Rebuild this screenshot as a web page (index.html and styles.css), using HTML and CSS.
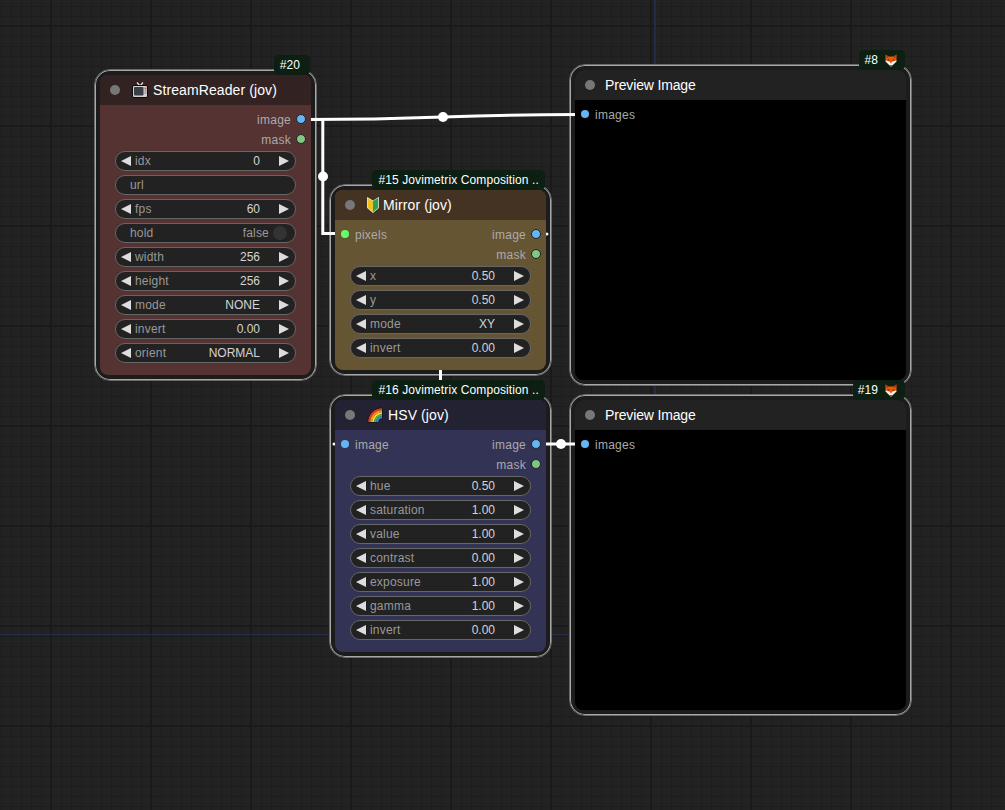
FILE: index.html
```html
<!DOCTYPE html>
<html>

<head>
    <title>Jovimetrix graph</title>
    <link rel="stylesheet" href="styles.css">
</head>

<body>
    <svg class="icon-defs" width="0" height="0">
        <symbol id="fox" viewBox="0 0 12 13">
            <path d="M0.5 0.5 L3.5 2.5 H8.5 L11.5 0.5 L11.5 7 L6 12.5 L0.5 7 Z" fill="#e8590c" />
            <path d="M0.5 0.5 L3.5 2.5 L2 4.5 Z M11.5 0.5 L8.5 2.5 L10 4.5 Z" fill="#a83c08" />
            <path d="M0.7 6.5 L4.5 7.5 L6 9.5 L7.5 7.5 L11.3 6.5 L11.5 7.5 L6 12.8 L0.5 7.5 Z" fill="#f6f1ea" />
            <path d="M5 11 H7 L6 12.6 Z" fill="#2b2220" />
            <path d="M2.8 5.4 H4.3 V6.4 H2.8 Z M7.7 5.4 H9.2 V6.4 H7.7 Z" fill="#2b2220" />
        </symbol>
    </svg>

    <div class="canvas">
        <div class="guide guide-v"></div>
        <div class="guide guide-h"></div>

        <!-- StreamReader -->
        <section class="node node-stream">
            <span class="badge badge-short">#20</span>
            <div class="panel panel-red">
                <header class="title">
                    <i class="title-dot"></i>
                    <svg class="title-icon" viewBox="0 0 16 16">
                        <path d="M5 0.5 L8 4 L11 0.5" fill="none" stroke="#e6e6e6" stroke-width="1.2" />
                        <rect x="0.5" y="3.5" width="15" height="12" rx="1.5" fill="#d2d2d2" stroke="#0d0d0d" />
                        <rect x="2" y="5" width="9.5" height="8.5" rx="1" fill="#3b4046" />
                        <rect x="12.5" y="5.5" width="2" height="2" fill="#e5533d" />
                        <rect x="12.5" y="8.5" width="2" height="1" fill="#777" />
                        <rect x="12.5" y="10.5" width="2" height="1" fill="#777" />
                    </svg>
                    <span>StreamReader (jov)</span>
                </header>
                <div class="body">
                    <div class="slot slot-out"><span>image</span><i class="pin pin-image"></i></div>
                    <div class="slot slot-out"><span>mask</span><i class="pin pin-mask"></i></div>
                    <div class="widgets">
                        <div class="widget"><i class="arrow-l"></i><span class="label">idx</span><span class="value">0</span><i class="arrow-r"></i></div>
                        <div class="widget widget-plain"><span class="label">url</span></div>
                        <div class="widget"><i class="arrow-l"></i><span class="label">fps</span><span class="value">60</span><i class="arrow-r"></i></div>
                        <div class="widget widget-plain"><span class="label">hold</span><span class="toggle-text">false</span><i class="toggle"></i></div>
                        <div class="widget"><i class="arrow-l"></i><span class="label">width</span><span class="value">256</span><i class="arrow-r"></i></div>
                        <div class="widget"><i class="arrow-l"></i><span class="label">height</span><span class="value">256</span><i class="arrow-r"></i></div>
                        <div class="widget"><i class="arrow-l"></i><span class="label">mode</span><span class="value">NONE</span><i class="arrow-r"></i></div>
                        <div class="widget"><i class="arrow-l"></i><span class="label">invert</span><span class="value">0.00</span><i class="arrow-r"></i></div>
                        <div class="widget"><i class="arrow-l"></i><span class="label">orient</span><span class="value">NORMAL</span><i class="arrow-r"></i></div>
                    </div>
                </div>
            </div>
        </section>

        <!-- Mirror -->
        <section class="node node-mirror">
            <span class="badge">#15 Jovimetrix Composition ..</span>
            <div class="panel panel-yellow">
                <header class="title">
                    <i class="title-dot"></i>
                    <svg class="title-icon title-icon-mark" viewBox="0 0 12 16">
                        <path d="M0.5 0.5 L6 4 L11.5 0.5 V11 L6 15.5 L0.5 11 Z" fill="#f2c21a" stroke="#f2f2f2" stroke-width="0.8" />
                        <path d="M6 4 L11.2 0.9 V10.8 L6 15 Z" fill="#2f9e5b" />
                    </svg>
                    <span>Mirror (jov)</span>
                </header>
                <div class="body">
                    <div class="slot-pair">
                        <div class="slot slot-in"><i class="pin pin-pixels"></i><span>pixels</span></div>
                        <div class="slot slot-out"><span>image</span><i class="pin pin-image"></i></div>
                    </div>
                    <div class="slot slot-out"><span>mask</span><i class="pin pin-mask"></i></div>
                    <div class="widgets">
                        <div class="widget"><i class="arrow-l"></i><span class="label">x</span><span class="value">0.50</span><i class="arrow-r"></i></div>
                        <div class="widget"><i class="arrow-l"></i><span class="label">y</span><span class="value">0.50</span><i class="arrow-r"></i></div>
                        <div class="widget"><i class="arrow-l"></i><span class="label">mode</span><span class="value">XY</span><i class="arrow-r"></i></div>
                        <div class="widget"><i class="arrow-l"></i><span class="label">invert</span><span class="value">0.00</span><i class="arrow-r"></i></div>
                    </div>
                </div>
            </div>
        </section>

        <!-- HSV -->
        <section class="node node-hsv">
            <span class="badge">#16 Jovimetrix Composition ..</span>
            <div class="panel panel-blue">
                <header class="title">
                    <i class="title-dot"></i>
                    <svg class="title-icon" viewBox="0 0 16 16">
                        <path d="M0.5 15.5 A15 15 0 0 1 15.5 0.5 V11 A4.5 4.5 0 0 0 11 15.5 Z" fill="#111" />
                        <path d="M2.2 15 A12.8 12.8 0 0 1 15 2.2" fill="none" stroke="#e8352b" stroke-width="2" />
                        <path d="M4.2 15 A10.8 10.8 0 0 1 15 4.2" fill="none" stroke="#f59a1c" stroke-width="2" />
                        <path d="M6.2 15 A8.8 8.8 0 0 1 15 6.2" fill="none" stroke="#f6e02c" stroke-width="2" />
                        <path d="M8.2 15 A6.8 6.8 0 0 1 15 8.2" fill="none" stroke="#45b649" stroke-width="2" />
                        <path d="M10.2 15 A4.8 4.8 0 0 1 15 10.2" fill="none" stroke="#3a8ee6" stroke-width="2" />
                    </svg>
                    <span>HSV (jov)</span>
                </header>
                <div class="body">
                    <div class="slot-pair">
                        <div class="slot slot-in"><i class="pin pin-input"></i><span>image</span></div>
                        <div class="slot slot-out"><span>image</span><i class="pin pin-image"></i></div>
                    </div>
                    <div class="slot slot-out"><span>mask</span><i class="pin pin-mask"></i></div>
                    <div class="widgets">
                        <div class="widget"><i class="arrow-l"></i><span class="label">hue</span><span class="value">0.50</span><i class="arrow-r"></i></div>
                        <div class="widget"><i class="arrow-l"></i><span class="label">saturation</span><span class="value">1.00</span><i class="arrow-r"></i></div>
                        <div class="widget"><i class="arrow-l"></i><span class="label">value</span><span class="value">1.00</span><i class="arrow-r"></i></div>
                        <div class="widget"><i class="arrow-l"></i><span class="label">contrast</span><span class="value">0.00</span><i class="arrow-r"></i></div>
                        <div class="widget"><i class="arrow-l"></i><span class="label">exposure</span><span class="value">1.00</span><i class="arrow-r"></i></div>
                        <div class="widget"><i class="arrow-l"></i><span class="label">gamma</span><span class="value">1.00</span><i class="arrow-r"></i></div>
                        <div class="widget"><i class="arrow-l"></i><span class="label">invert</span><span class="value">0.00</span><i class="arrow-r"></i></div>
                    </div>
                </div>
            </div>
        </section>

        <!-- Previews -->
        <section class="node node-preview-a">
            <span class="badge badge-fox">#8 <svg class="fox"><use href="#fox" /></svg></span>
            <div class="panel panel-preview">
                <header class="title title-preview">
                    <i class="title-dot"></i>
                    <span>Preview Image</span>
                </header>
                <div class="body body-preview">
                    <div class="slot slot-in"><i class="pin pin-input"></i><span>images</span></div>
                </div>
            </div>
        </section>

        <section class="node node-preview-b">
            <span class="badge badge-fox">#19 <svg class="fox"><use href="#fox" /></svg></span>
            <div class="panel panel-preview">
                <header class="title title-preview">
                    <i class="title-dot"></i>
                    <span>Preview Image</span>
                </header>
                <div class="body body-preview">
                    <div class="slot slot-in"><i class="pin pin-input"></i><span>images</span></div>
                </div>
            </div>
        </section>

        <!-- links run over the selection frames but under the panels -->
        <svg class="links" width="1005" height="810">
            <g fill="none" stroke="#fff" stroke-width="3">
                <path d="M306 119.5 C443 119.5 443 114.5 580 114.5" />
                <path d="M306 119.5 H322.8 V233.5 H340" />
                <path d="M440.5 360 V400" />
                <path d="M541 444 H580" />
            </g>
            <g fill="#fff">
                <circle cx="443" cy="117" r="5" />
                <circle cx="323" cy="176.5" r="5" />
                <circle cx="561" cy="444" r="5" />
                <circle cx="547" cy="234" r="1.5" />
                <circle cx="334" cy="444" r="1.5" />
            </g>
        </svg>
    </div>
</body>

</html>
```

FILE: styles.css
```css
* {
    box-sizing: border-box;
}

body {
    margin: 0;
    background: #222222;
    font-family: "Liberation Sans", Arial, sans-serif;
    overflow: hidden;
}

.icon-defs {
    position: absolute;
}

/* Graph canvas with its grid */
.canvas {
    position: relative;
    width: 1005px;
    height: 810px;
    overflow: hidden;
    background-color: #222222;
    background-image:
        linear-gradient(90deg, #1a1a1a 2px, transparent 2px),
        linear-gradient(#1a1a1a 2px, transparent 2px),
        linear-gradient(90deg, #1d1d1d 1px, transparent 1px),
        linear-gradient(#1d1d1d 1px, transparent 1px);
    background-size: 100px 100px, 100px 100px, 10px 10px, 10px 10px;
    background-position: 50px 0, 0 25px, 1px 0, 0 6px;
}

.guide {
    position: absolute;
    background: #232c44;
}

.guide-v {
    left: 654px;
    top: 0;
    width: 2px;
    height: 400px;
}

.guide-h {
    left: 0;
    top: 634px;
    width: 600px;
    height: 1px;
}

.links {
    position: absolute;
    left: 0;
    top: 0;
    z-index: 1;
}

/* Node: selection frame + coloured panel */
.node {
    position: absolute;
    padding: 4px;
    background: #1c1c1c;
    border: 1px solid #6a6a6a;
    box-shadow: inset 0 0 0 1px #a8a8a8;
    border-radius: 16px;
    --gap: 5px;
}

.node > .panel {
    margin: 1px;
    height: calc(100% - 2px);
}

.node-stream {
    left: 94px;
    top: 69px;
    width: 223px;
    height: 312px;
}

.node-mirror {
    left: 329px;
    top: 184px;
    width: 223px;
    height: 192px;
}

.node-hsv {
    left: 329px;
    top: 394px;
    width: 223px;
    height: 264px;
}

.node-preview-a {
    left: 569px;
    top: 64px;
    width: 343px;
    height: 322px;
}

.node-preview-b {
    left: 569px;
    top: 394px;
    width: 343px;
    height: 322px;
}

.panel {
    position: relative;
    z-index: 2;
    display: flex;
    flex-direction: column;
    height: 100%;
    border-radius: 8px;
    overflow: hidden;
}

.panel-red {
    background: #553333;
    --title: #332222;
}

.panel-yellow {
    background: #665533;
    --title: #443322;
}

.panel-blue {
    background: #333355;
    --title: #222233;
}

.panel-preview {
    background: #000000;
    --title: #222222;
}

.badge {
    position: absolute;
    z-index: 3;
    top: -15px;
    right: 6px;
    height: 20px;
    padding: 0 6px;
    display: flex;
    align-items: center;
    gap: 7px;
    background: #0c1f12;
    border-radius: 5px;
    color: #ffffff;
    font-size: 12px;
    letter-spacing: 0.11px;
    white-space: nowrap;
}

.badge-short {
    padding-right: 10px;
}

.badge-fox {
    padding: 0 8px 0 5px;
}

.fox {
    width: 12px;
    height: 13px;
}

.title {
    display: flex;
    align-items: center;
    flex: none;
    height: 30px;
    padding-left: 10px;
    background: var(--title);
    color: #ffffff;
    font-size: 14px;
    letter-spacing: 0.1px;
}

.title-dot {
    width: 10px;
    height: 10px;
    border-radius: 50%;
    background: #777777;
}

.title-icon {
    width: 16px;
    height: 16px;
    margin: 0 5px 0 12px;
}

.title-icon-mark {
    width: 12px;
    margin: 0 4px 0 12px;
}

.title-preview {
    letter-spacing: -0.15px;
}

.title-preview .title-dot {
    margin-right: 10px;
}

.body {
    flex: 1;
    padding-top: 4px;
    font-size: 12px;
}

/* Slots */
.slot {
    display: flex;
    align-items: center;
    height: 20px;
    color: #aaaaaa;
    letter-spacing: 0.25px;
}

.slot span {
    padding-top: 1px;
}

.slot-pair {
    display: flex;
    justify-content: space-between;
}

.slot-out {
    justify-content: flex-end;
    gap: 5px;
    padding-right: 5px;
}

.slot-in {
    gap: 5px;
    padding-left: 5px;
}

.pin {
    width: 10px;
    height: 10px;
    border-radius: 50%;
    border: 1.5px solid #222222;
}

.pin-image {
    background: #64b5f6;
}

.pin-mask {
    background: #81c784;
}

.pin-input {
    background: #64b5f6;
    border: 1px solid transparent;
    background-clip: padding-box;
}

.pin-pixels {
    background: #64ff64;
    border: 1px solid transparent;
    background-clip: padding-box;
}

/* Widgets */
.widgets {
    display: flex;
    flex-direction: column;
    gap: 4px;
    margin: 2px 15px 0;
}

.widget {
    display: flex;
    align-items: center;
    height: 20px;
    padding: 0 6px 0 5px;
    background: #222222;
    border: 1px solid #666666;
    border-radius: 10px;
    color: #999999;
}

.widget-plain {
    padding-left: 14px;
}

.arrow-l,
.arrow-r {
    width: 10px;
    height: 10px;
    background: #dddddd;
}

.arrow-l {
    clip-path: polygon(100% 0, 100% 100%, 0 50%);
}

.arrow-r {
    clip-path: polygon(0 0, 100% 50%, 0 100%);
}

.label {
    margin-left: 4px;
    letter-spacing: 0.2px;
}

.widget-plain .label {
    margin-left: 0;
}

.value {
    margin-left: auto;
    margin-right: 19px;
    color: #d4d4d4;
}

.toggle-text {
    margin-left: auto;
    margin-right: 4px;
    letter-spacing: 0.2px;
}

.toggle {
    width: 14px;
    height: 14px;
    margin-right: 2px;
    border-radius: 50%;
    background: #333333;
}
```
